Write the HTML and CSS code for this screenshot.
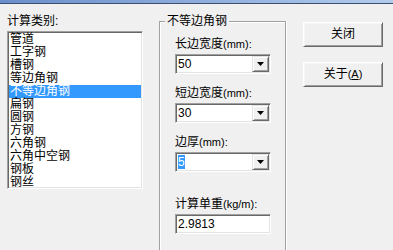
FILE: index.html
```html
<!DOCTYPE html>
<html>
<head>
<meta charset="utf-8">
<link rel="stylesheet" href="styles.css">
</head>
<body>
<div class="titlebar"></div>
<div class="main">
  <div class="left">
    <div class="caption">计算类别:</div>
    <div class="listbox">
      <div class="item">管道</div>
      <div class="item">工字钢</div>
      <div class="item">槽钢</div>
      <div class="item">等边角钢</div>
      <div class="item sel">不等边角钢</div>
      <div class="item">扁钢</div>
      <div class="item">圆钢</div>
      <div class="item">方钢</div>
      <div class="item">六角钢</div>
      <div class="item">六角中空钢</div>
      <div class="item">钢板</div>
      <div class="item">钢丝</div>
    </div>
  </div>
  <div class="group">
    <div class="group-title">不等边角钢</div>
    <div class="field">
      <div class="label">长边宽度<span class="unit">(mm):</span></div>
      <div class="combo"><span class="value">50</span><span class="drop"><svg width="7" height="4" viewBox="0 0 7 4"><polygon points="0,0 7,0 3.5,4" fill="#000"/></svg></span></div>
    </div>
    <div class="field">
      <div class="label">短边宽度<span class="unit">(mm):</span></div>
      <div class="combo"><span class="value">30</span><span class="drop"><svg width="7" height="4" viewBox="0 0 7 4"><polygon points="0,0 7,0 3.5,4" fill="#000"/></svg></span></div>
    </div>
    <div class="field">
      <div class="label">边厚<span class="unit">(mm):</span></div>
      <div class="combo"><span class="value"><span class="hl">5</span></span><span class="drop"><svg width="7" height="4" viewBox="0 0 7 4"><polygon points="0,0 7,0 3.5,4" fill="#000"/></svg></span></div>
    </div>
    <div class="field result">
      <div class="label">计算单重<span class="unit">(kg/m):</span></div>
      <div class="textbox">2.9813</div>
    </div>
  </div>
  <div class="buttons">
    <button class="btn">关闭</button>
    <button class="btn">关于<span class="unit">(<u>A</u>)</span></button>
  </div>
</div>
</body>
</html>
```
FILE: styles.css
```css
html, body {
  margin: 0;
  padding: 0;
}
body {
  width: 393px;
  height: 250px;
  overflow: hidden;
  background: #f0f0f0;
  color: #000;
  font-family: "Liberation Sans", "Noto Sans CJK SC", sans-serif;
  font-size: 12px;
  line-height: 13px;
}
.titlebar {
  height: 3px;
  background: linear-gradient(to right, #6a8ecb, #b3cced);
  border-bottom: 1px solid #3d4f70;
}
.main {
  display: flex;
  align-items: flex-start;
  padding-left: 7px;
}
.left {
  width: 136px;
  padding-top: 11px;
}
.caption {
  height: 13px;
  margin-bottom: 3px;
}
.listbox {
  box-sizing: border-box;
  height: 158px;
  padding: 1px;
  background: #fff;
  border: 1px solid;
  border-color: #a0a0a0 #fff #fff #a0a0a0;
  box-shadow: inset 1px 1px 0 #696969, inset -1px -1px 0 #e3e3e3;
  overflow: hidden;
}
.item {
  height: 13px;
  line-height: 13px;
  padding-left: 1px;
  white-space: nowrap;
}
.item.sel {
  background: #3399ff;
  color: #fff;
}
.group {
  position: relative;
  box-sizing: border-box;
  width: 127px;
  height: 229px;
  margin-left: 16px;
  margin-top: 17px;
  padding: 16px 0 0 15px;
  border: 1px solid #a0a0a0;
  border-bottom: 0;
  box-shadow: inset 1px 1px 0 #fff, 1px 0 0 #fff;
}
.group-title {
  position: absolute;
  top: -7px;
  left: 5px;
  padding: 0 2px;
  background: #f0f0f0;
  line-height: 13px;
  white-space: nowrap;
}
.field {
  display: flex;
  flex-direction: column;
  gap: 3px;
}
.field + .field {
  margin-top: 13px;
}
.field.result {
  margin-top: 26px;
}
.label {
  height: 13px;
  white-space: nowrap;
}
.unit {
  font-size: 11px;
}
.combo, .textbox {
  box-sizing: border-box;
  width: 96px;
  height: 20px;
  padding: 1px;
  background: #fff;
  border: 1px solid;
  border-color: #a0a0a0 #fff #fff #a0a0a0;
  box-shadow: inset 1px 1px 0 #696969, inset -1px -1px 0 #e3e3e3;
}
.combo {
  display: flex;
}
.value {
  flex: 1;
  padding-left: 1px;
  line-height: 16px;
}
.textbox {
  padding-left: 2px;
  line-height: 16px;
}
.hl {
  background: #3399ff;
  color: #fff;
}
.drop {
  box-sizing: border-box;
  width: 17px;
  height: 16px;
  display: flex;
  align-items: center;
  justify-content: center;
  background: #f0f0f0;
  border: 1px solid;
  border-color: #e3e3e3 #696969 #696969 #e3e3e3;
  box-shadow: inset 1px 1px 0 #fff, inset -1px -1px 0 #a0a0a0;
}
.drop svg {
  display: block;
}
.buttons {
  display: flex;
  flex-direction: column;
  gap: 15px;
  margin-left: 17px;
  padding-top: 18px;
}
.btn {
  box-sizing: border-box;
  width: 80px;
  height: 25px;
  padding: 0;
  margin: 0;
  font: inherit;
  line-height: 13px;
  color: #000;
  background: #f0f0f0;
  border: 1px solid;
  border-color: #fff #696969 #696969 #fff;
  box-shadow: inset 1px 1px 0 #f6f6f6, inset -1px -1px 0 #a0a0a0;
  border-radius: 0;
}
.btn u {
  text-decoration: underline;
}
```
